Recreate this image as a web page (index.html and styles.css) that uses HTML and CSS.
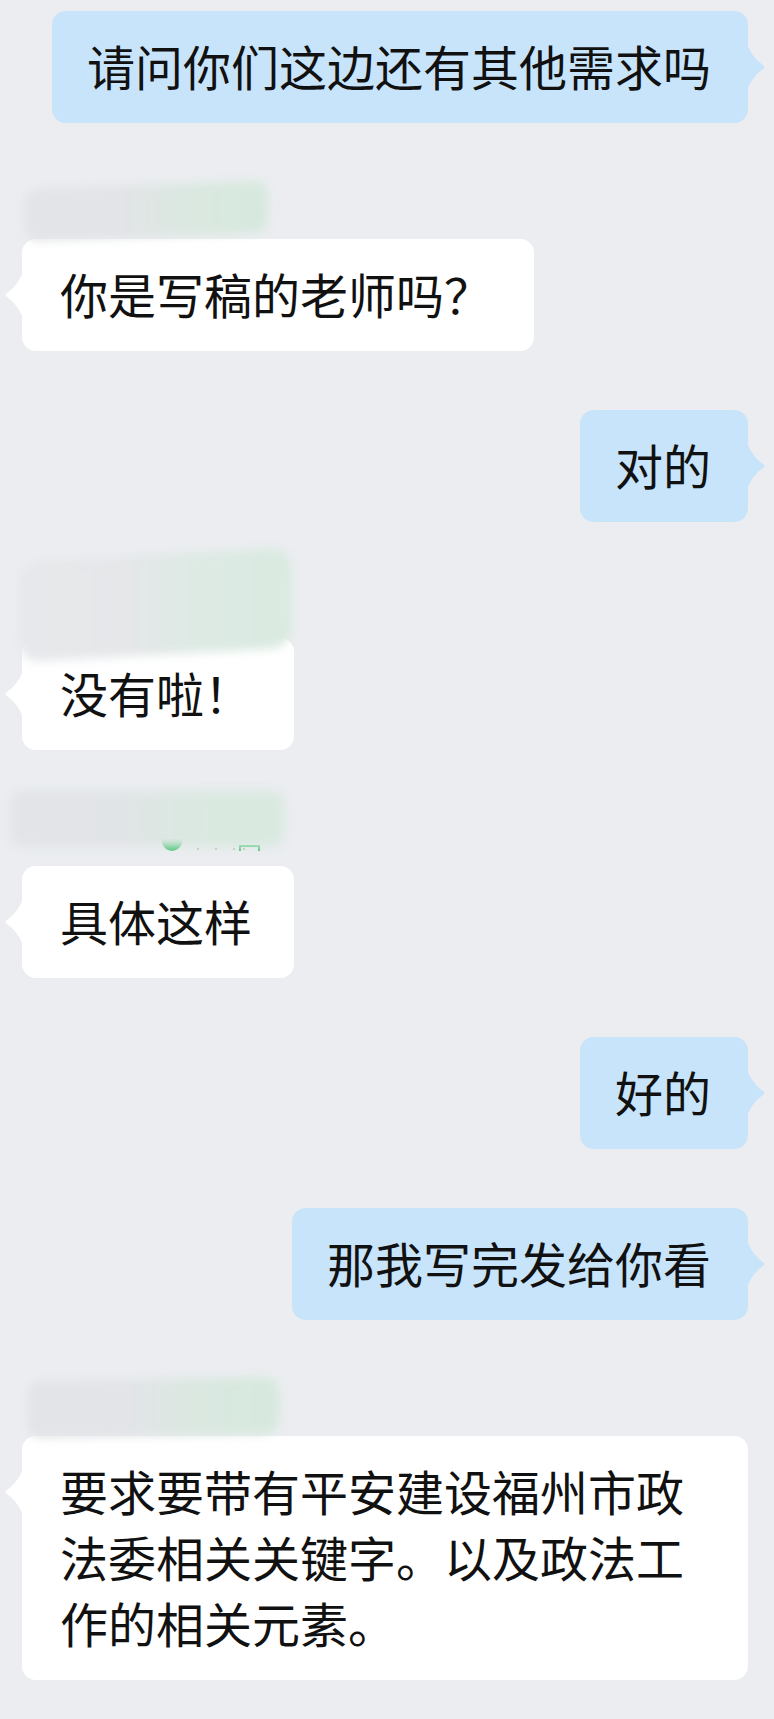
FILE: index.html
```html
<!DOCTYPE html>
<html lang="zh-CN">
<head>
<meta charset="utf-8">
<title>聊天记录</title>
<link rel="stylesheet" href="styles.css">
</head>
<body>
<main class="chat">
  <div class="msg out"><div class="bubble">请问你们这边还有其他需求吗</div></div>

  <div class="msg in">
    <div class="nick"><span class="smudge s2"></span></div>
    <div class="bubble">你是写稿的老师吗？</div>
  </div>

  <div class="msg out"><div class="bubble">对的</div></div>

  <div class="msg in">
    <div class="nick"><span class="smudge s4"></span></div>
    <div class="bubble">没有啦！</div>
  </div>

  <div class="msg in">
    <div class="nick">
      <span class="frag dot"></span>
      <span class="frag pix p1"></span>
      <span class="frag pix p2"></span>
      <span class="frag pix p3"></span>
      <span class="frag pix p4"></span>
      <span class="frag bracket"></span>
      <span class="smudge s5"></span>
    </div>
    <div class="bubble">具体这样</div>
  </div>

  <div class="msg out"><div class="bubble">好的</div></div>

  <div class="msg out"><div class="bubble">那我写完发给你看</div></div>

  <div class="msg in">
    <div class="nick"><span class="smudge s8"></span></div>
    <div class="bubble wide">要求要带有平安建设福州市政法委相关关键字。以及政法工作的相关元素。</div>
  </div>
</main>
</body>
</html>
```

FILE: styles.css
```css
html, body {
  margin: 0;
  padding: 0;
}

body {
  background: #ebedf0;
  min-height: 1719px;
  font-family: "Noto Sans CJK SC", "Noto Sans", sans-serif;
  color: #111;
}

.chat {
  display: flex;
  flex-direction: column;
  gap: 59px;
  padding: 11px 26px 40px 22px;
}

.msg {
  display: flex;
  flex-direction: column;
}

.msg.out {
  align-items: flex-end;
}

.msg.in {
  align-items: flex-start;
}

.nick {
  position: relative;
  height: 57px;
  width: 100%;
  z-index: 2;
}

.bubble {
  position: relative;
  font-size: 48px;
  line-height: 66px;
  border-radius: 14px;
  padding: 21px 37px 25px 35px;
  background: #c8e4fb;
  white-space: nowrap;
}

.msg.in .bubble {
  background: #fff;
  padding: 21px 42px 25px 38px;
}

.bubble.wide {
  white-space: normal;
  width: 646px;
  padding-top: 21px;
  padding-bottom: 23px;
}

.bubble::after {
  content: "";
  position: absolute;
  top: 33px;
  width: 19px;
  height: 46px;
  background: inherit;
}

.msg.out .bubble::after {
  right: -18px;
  clip-path: path("M0 0 C4 10 10 17 16 21 Q19 23 16 25 C10 29 4 36 0 46 Z");
}

.msg.in .bubble::after {
  left: -18px;
  clip-path: path("M19 0 C15 10 9 17 3 21 Q0 23 3 25 C9 29 15 36 19 46 Z");
}

.smudge {
  position: absolute;
  display: block;
  border-radius: 14px;
  filter: blur(5px);
  background: linear-gradient(90deg, #e3e4e8 0%, #e2e4e7 40%, #dae8e0 70%, #d6e9de 100%);
}

.s2 {
  left: 2px;
  top: 3px;
  width: 244px;
  height: 52px;
  transform: skewY(-2deg);
}

.s4 {
  left: -3px;
  top: -26px;
  width: 272px;
  height: 100px;
  border-radius: 20px;
  background: linear-gradient(90deg, #e7e8eb 0%, #e5e7e9 40%, #dceae3 70%, #d9eae0 100%);
  transform: skewY(-3deg);
}

.s5 {
  left: -12px;
  top: -18px;
  width: 274px;
  height: 56px;
  background: linear-gradient(90deg, #e3e4e8 0%, #e1e4e6 40%, #d9e9e0 75%, #d9e9e0 100%);
}

.s8 {
  left: 5px;
  top: 0;
  width: 252px;
  height: 57px;
  transform: skewY(-1deg);
}

.frag {
  position: absolute;
  display: block;
}

.frag.dot {
  left: 140px;
  top: 30px;
  width: 20px;
  height: 12px;
  border-radius: 0 0 10px 10px;
  background: #3ec46d;
}

.frag.pix {
  top: 39px;
  width: 2px;
  height: 2px;
  background: #b9c3bd;
}

.p1 { left: 175px; }
.p2 { left: 193px; }
.p3 { left: 221px; }
.p4 { left: 211px; background: #6fcf8f; }

.frag.bracket {
  left: 217px;
  top: 36px;
  width: 17px;
  height: 4px;
  border: 2px solid #45c26f;
  border-bottom: none;
}
```
